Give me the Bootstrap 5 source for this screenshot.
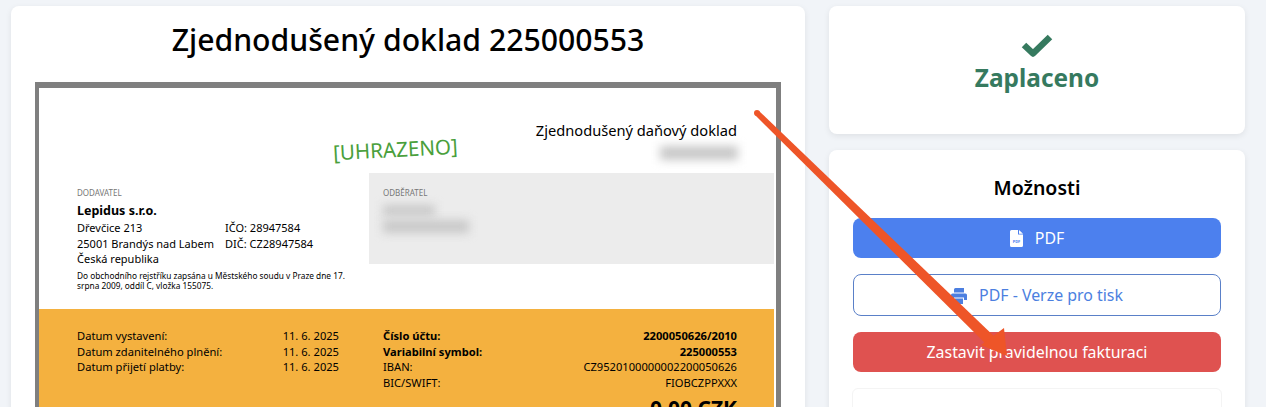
<!DOCTYPE html>
<html lang="cs">
<head>
  <meta charset="UTF-8" />
  <meta name="viewport" content="width=device-width, initial-scale=1.0" />
  <title>Zjednodušený doklad 225000553</title>
  <link href="https://cdn.jsdelivr.net/npm/bootstrap@5.3.0/dist/css/bootstrap.min.css" rel="stylesheet" />
  <style>
    html, body { height: 407px; overflow: hidden; }
    body { background: #f1f4f8; font-family: "Noto Sans", "Open Sans", sans-serif; color: #000; position: relative; }
    .page-wrap { padding: 6px 21px 0 11px; gap: 24px; }
    .panel { background: #fff; border-radius: 8px; box-shadow: 0 2px 6px rgba(0, 0, 0, .08); }
    .panel-main { width: 794px; height: 420px; padding: 0 24px; flex: none; }
    .panel-main h1 { font-size: 30.2px; font-weight: 500; line-height: 40px; margin: 14px 0 22px; text-align: center; }
    .side-col { width: 416px; flex: none; gap: 16px; }
    .doc-frame { border: solid #7f7f7f; border-width: 6px 5px 0 4px; height: 340px; background: #fff; padding-right: 2px; }
    .doc-head { height: 85px; padding: 32px 37px 0 0; text-align: right; font-size: 14.65px; line-height: 20px; position: relative; }
    .blur-box { background: #c8c8c8; filter: blur(5px); }
    .blur-num { width: 78px; height: 14px; margin: 6px 0 0 auto; position: relative; left: 1px; }
    .stamp { position: absolute; left: 294px; top: 47px; font-size: 20.6px; line-height: 28px; color: #4a9f3c; transform: rotate(-3deg); }
    .doc-parties { height: 136px; }
    .supplier { width: 330px; flex: none; padding: 14px 0 0 38px; font-size: 11px; line-height: 15.6px; }
    .party-label { font-size: 8px; line-height: 12px; color: #777; text-transform: uppercase; }
    .supplier-name { font-size: 12.5px; font-weight: 700; line-height: 18px; margin-top: 3px; }
    .supplier-ids { width: 148px; flex: none; }
    .supplier-note { font-size: 8.3px; line-height: 10px; margin-top: 4px; width: 280px; }
    .customer { height: 91px; background: #ececec; padding: 14px 14px; }
    .blur-a { width: 52px; height: 11px; margin-top: 6px; }
    .blur-b { width: 86px; height: 13px; margin-top: 4px; }
    .doc-pay { background: #f4b13f; height: 100px; padding: 19px 37px 0 38px; font-size: 11.15px; line-height: 15.5px; }
    .pay-dates { width: 262px; flex: none; }
    .pay-dates-gap { margin-top: 31px; }
    .pay-bank { width: 354px; flex: none; }
    .pay-total { font-size: 21px; font-weight: 700; line-height: 24px; margin-top: 6px; }
    .pay-total span:first-child { font-size: 11.1px; line-height: 30px; }
    .status-box { height: 128px; padding-top: 27px; text-align: center; color: #367a5f; }
    .status-box svg { display: block; margin: 0 auto; }
    .status-text { font-size: 24.4px; font-weight: 700; line-height: 32px; margin-top: 5px; }
    .options-box { height: 300px; padding: 24px; text-align: center; }
    .options-box h2 { font-size: 19.5px; font-weight: 600; line-height: 28px; margin: 0 0 16px; }
    .act-btn { display: flex; align-items: center; justify-content: center; gap: 12px; width: 100%; height: 40px; padding: 1px 0 0; border-radius: 8px; font-size: 15.9px; margin-bottom: 16px; }
    .act-pdf { background: #4c80ee; border: 0; color: #fff; }
    .act-print { height: 42px; background: #fff; border: 1px solid #5a80c8; color: #4c7fe0; }
    .act-stop { background: #df5250; border: 0; color: #fff; }
    .inner-box { height: 60px; margin: 13px -1px 0; border: 1px solid #f4f4f4; border-radius: 6px; }
    .pdf-glyph { font-size: 4px; font-weight: 700; }
    .arrow-mark { position: absolute; left: 750px; top: 105px; pointer-events: none; }
  </style>
</head>
<body>
  <div class="d-flex align-items-start page-wrap">
    <div class="panel panel-main">
      <h1>Zjednodušený doklad 225000553</h1>
      <div class="doc-frame">
        <div class="doc-head">
          <div>Zjednodušený daňový doklad</div>
          <div class="blur-box blur-num"></div>
          <div class="stamp">[UHRAZENO]</div>
        </div>
        <div class="d-flex doc-parties">
          <div class="supplier">
            <div class="party-label">Dodavatel</div>
            <div class="supplier-name">Lepidus s.r.o.</div>
            <div class="d-flex">
              <div class="supplier-ids">Dřevčice 213<br />25001 Brandýs nad Labem<br />Česká republika</div>
              <div>IČO: 28947584<br />DIČ: CZ28947584</div>
            </div>
            <div class="supplier-note">Do obchodního rejstříku zapsána u Městského soudu v Praze dne 17. srpna 2009, oddíl C, vložka 155075.</div>
          </div>
          <div class="customer flex-grow-1">
            <div class="party-label">Odběratel</div>
            <div class="blur-box blur-a"></div>
            <div class="blur-box blur-b"></div>
          </div>
        </div>
        <div class="d-flex doc-pay">
          <div class="pay-dates">
            <div class="d-flex justify-content-between">
              <div>Datum vystavení:<br />Datum zdanitelného plnění:<br />Datum přijetí platby:</div>
              <div class="text-end">11. 6. 2025<br />11. 6. 2025<br />11. 6. 2025</div>
            </div>
            <div class="d-flex justify-content-between pay-dates-gap"><span>Způsob platby:</span><span>převodem</span></div>
          </div>
          <div class="pay-bank ms-auto">
            <div class="d-flex justify-content-between fw-bold"><span>Číslo účtu:</span><span>2200050626/2010</span></div>
            <div class="d-flex justify-content-between fw-bold"><span>Variabilní symbol:</span><span>225000553</span></div>
            <div class="d-flex justify-content-between"><span>IBAN:</span><span>CZ9520100000002200050626</span></div>
            <div class="d-flex justify-content-between"><span>BIC/SWIFT:</span><span>FIOBCZPPXXX</span></div>
            <div class="d-flex justify-content-between pay-total"><span>K úhradě:</span><span>0,00 CZK</span></div>
          </div>
        </div>
      </div>
    </div>
    <div class="d-flex flex-column side-col">
      <div class="panel status-box">
        <svg width="32" height="24" viewBox="0 0 32 24"><path d="M3 12 L12 20.5 L29 4" fill="none" stroke="#367a5f" stroke-width="6.5" stroke-linejoin="round" /></svg>
        <div class="status-text">Zaplaceno</div>
      </div>
      <div class="panel options-box">
        <h2>Možnosti</h2>
        <button type="button" class="btn act-btn act-pdf">
          <svg width="13" height="17" viewBox="0 0 13 17"><path d="M1.5 0H8V4.5H13V15.5A1.5 1.5 0 0 1 11.5 17H1.5A1.5 1.5 0 0 1 0 15.5V1.5A1.5 1.5 0 0 1 1.5 0ZM9 0 13 3.7H9Z" fill="#fff" /><text class="pdf-glyph" x="6.5" y="12.5" text-anchor="middle" fill="#4c80ee">PDF</text></svg>
          PDF
        </button>
        <button type="button" class="btn act-btn act-print">
          <svg width="16" height="16" viewBox="0 0 16 16"><path d="M3 1.5A1.5 1.5 0 0 1 4.5 0H13V4.5H3ZM0 7A1.5 1.5 0 0 1 1.5 5.5H14.5A1.5 1.5 0 0 1 16 7V12H13V9.5H3V12H0ZM4 10.5H12V16H4Z" fill="#4c7fe0" /></svg>
          PDF - Verze pro tisk
        </button>
        <button type="button" class="btn act-btn act-stop">Zastavit pravidelnou fakturaci</button>
        <div class="inner-box"></div>
      </div>
    </div>
  </div>
  <svg class="arrow-mark" width="260" height="260" viewBox="0 0 260 260">
    <circle cx="7" cy="8" r="3" fill="#ee5528" />
    <path d="M9 6 L248 235 L240 243 L5 10 Z" fill="#ee5528" />
    <path d="M231 240 L254 223 L257 251 Z" fill="#ee5528" />
  </svg>
  <script src="https://cdn.jsdelivr.net/npm/bootstrap@5.3.0/dist/js/bootstrap.bundle.min.js"></script>
</body>
</html>
